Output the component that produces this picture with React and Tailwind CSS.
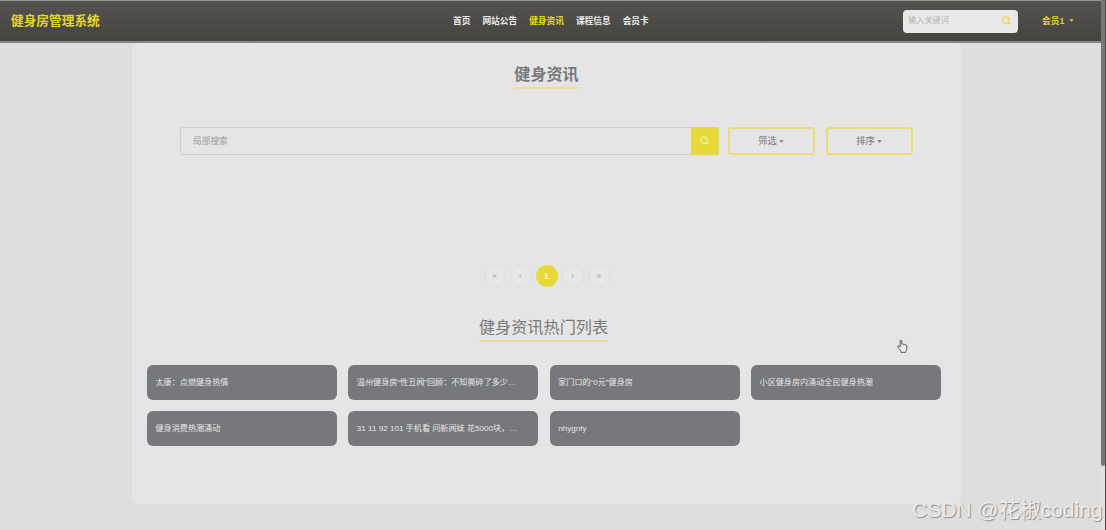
import React from "react";

const navItems = ["首页", "网站公告", "健身资讯", "课程信息", "会员卡"];
const pages = ["«", "‹", "1", "›", "»"];
const hotList = [
  "太康：点燃健身热情",
  "温州健身房“性丑闻”回顾：不知撕碎了多少…",
  "家门口的“0元”健身房",
  "小区健身房内涌动全民健身热潮",
  "健身消费热潮涌动",
  "31 11 92 101 手机看 问新闻妹 花5000块，…",
  "nhygnfy",
];

function SearchIcon({ className }) {
  return (
    <svg viewBox="0 0 10 10" fill="none" stroke="currentColor" className={className}>
      <circle cx="4.6" cy="4.6" r="3.7" strokeWidth="1.4" />
      <path d="M7.2 7.2 9.4 9.4" strokeWidth="1.6" />
      <path d="M4.7 2.7a1.9 1.9 0 0 1 1.8 1.8" strokeWidth="0.8" />
    </svg>
  );
}

function Caret({ className }) {
  return (
    <svg viewBox="0 0 6 4" fill="currentColor" className={className}>
      <path d="M0 0.2h6L3 3.8z" />
    </svg>
  );
}

function Navbar() {
  return (
    <nav className="flex h-[43px] items-center border-t border-b-2 border-t-[#969894] border-b-[#85868a] bg-linear-to-b from-[#545350] to-[#454441] pl-[11px]">
      <div className="w-[442px] text-[12.7px] leading-none font-bold whitespace-nowrap text-[#e5d81f]">
        健身房管理系统
      </div>
      <div className="flex w-[450px] gap-3 text-[8.7px] leading-none font-bold whitespace-nowrap text-[#e9e9e9]">
        {navItems.map((item) => (
          <a key={item} className={item === "健身资讯" ? "text-[#e8dc0c]" : ""}>
            {item}
          </a>
        ))}
      </div>
      <div className="flex h-[23px] w-[115px] items-center justify-between rounded-[4px] bg-[#e9e9e9] pr-[7px] pl-[5px] text-[8.2px] leading-none text-[#b3b4b6]">
        <span>输入关键词</span>
        <SearchIcon className="mb-[2px] size-[9px] text-[#e8da45]" />
      </div>
      <div className="ml-6 flex items-center gap-[5px] text-[8.7px] leading-none font-bold whitespace-nowrap text-[#e0d32b]">
        会员1
        <Caret className="h-[3px] w-[5px]" />
      </div>
    </nav>
  );
}

function FilterButton({ children }) {
  return (
    <button className="flex h-[28px] w-[87px] items-center justify-center gap-[2px] rounded-[3px] border-2 border-[#eadf6c] pt-[2px] pr-[1px] text-[9.3px] leading-none text-[#77787b]">
      {children}
      <Caret className="mb-[2px] h-[3px] w-[5px]" />
    </button>
  );
}

export default function App() {
  return (
    <div className="relative flex h-[530px] w-[1106px] overflow-hidden bg-[#dedede] font-['Liberation_Sans','Noto_Sans_CJK_SC',sans-serif]">
      <div className="w-[1101px]">
        <Navbar />
        <main className="ml-[132px] flex h-[461px] w-[829px] flex-col rounded-[6px] bg-[#e5e5e5]">
          <h1 className="mt-[21px] h-[25px] self-center border-b-2 border-b-[#eae095] text-[16.1px] leading-[20px] font-bold text-[#77797d]">
            健身资讯
          </h1>

          <div className="mt-[38px] ml-12 flex h-[28px]">
            <div className="flex w-[511px] items-center rounded-l-[2px] border border-r-0 border-[#cfd0d1] pl-[12px] text-[8.7px] leading-none text-[#97999d]">
              局部搜索
            </div>
            <button className="flex w-[28px] items-center justify-center rounded-r-[2px] bg-[#e7d936] pr-[2px] pb-[2px]">
              <SearchIcon className="size-[9px] text-[#f0eba4]" />
            </button>
            <div className="ml-[9px] flex gap-[11px]">
              <FilterButton>筛选</FilterButton>
              <FilterButton>排序</FilterButton>
            </div>
          </div>

          <div className="mt-[110px] flex justify-center gap-[4px]">
            {pages.map((p) =>
              p === "1" ? (
                <span key={p} className="flex size-[22px] items-center justify-center rounded-full bg-[#e8da35] text-[9.5px] leading-none font-bold text-[#f5f3d8]">
                  {p}
                </span>
              ) : (
                <span key={p} className="flex size-[22px] items-center justify-center rounded-full border border-[#dedede] bg-[#e7e7e7] text-[8.5px] leading-none text-[#9a9b9d]">
                  {p}
                </span>
              )
            )}
          </div>

          <h2 className="mt-[30px] mr-[6px] h-[25px] self-center border-b-2 border-b-[#eae095] text-[16.15px] leading-[21px] text-[#77797d]">
            健身资讯热门列表
          </h2>

          <div className="mt-[23px] grid grid-cols-4 gap-x-[11.4px] gap-y-[11px] pr-[20px] pl-[15px]">
            {hotList.map((title) => (
              <div key={title} className="flex h-[35px] items-center rounded-[6px] bg-[#77787c] pt-[2px] pl-[8.5px] text-[8.1px] leading-none whitespace-nowrap text-[#e6e6e7]">
                {title}
              </div>
            ))}
          </div>
        </main>
      </div>

      {/* scrollbar */}
      <div className="flex w-[5px] flex-col border-r border-[#4c4c4d] bg-[#e2e2e2]">
        <div className="h-[466px] rounded-b-[2px] bg-[#777778]" />
      </div>

      {/* mouse pointer */}
      <svg viewBox="0 0 11 14" className="absolute top-[339px] left-[897px] h-[14px] w-[11px]" fill="#ececec" stroke="#505050" strokeWidth="0.9" strokeLinejoin="round">
        <path d="M3.2 8V1.7Q3.9.4 4.8 1.7V5.2Q5.9 4.4 6.4 5.5Q7.5 4.9 8 6Q9.8 5.6 9.8 7V10Q9.5 11.5 8.7 12.2V13.4H4V12.2Q2.5 10.6.7 7.9Q.6 6.4 2 6.8Z" />
      </svg>

      <div className="absolute top-[498px] left-[912px] text-[21px] leading-[24px] whitespace-nowrap text-[#ececec] [text-shadow:1px_1px_1px_#8a8a8a]">
        CSDN @花椒coding
      </div>
    </div>
  );
}
